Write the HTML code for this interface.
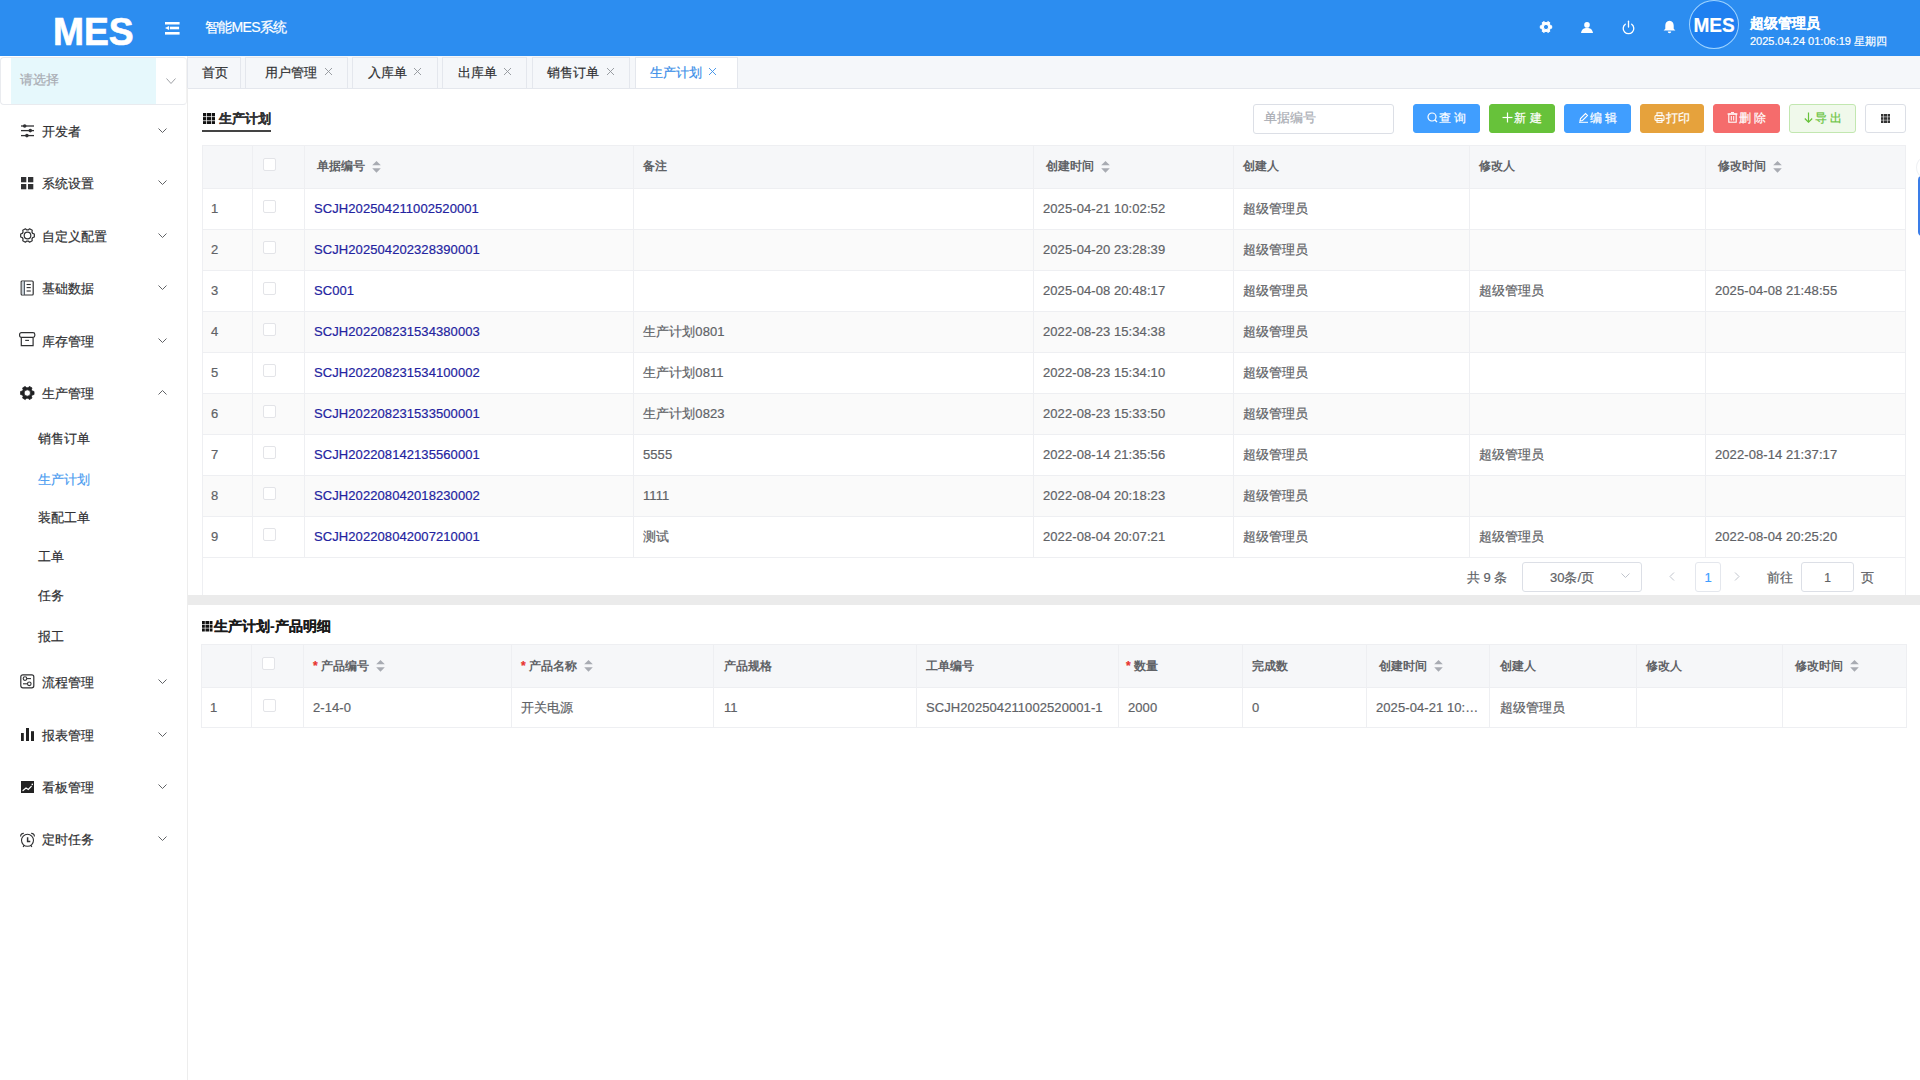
<!DOCTYPE html><html><head><meta charset="utf-8"><title>MES</title><style>
*{box-sizing:border-box}
body{margin:0;width:1920px;height:1080px;position:relative;overflow:hidden;background:#fff;font-family:"Liberation Sans",sans-serif;color:#303133}
.abs{position:absolute}
.t{position:absolute;white-space:nowrap;line-height:16px}
.hdr{left:0;top:0;width:1920px;height:56px;background:#2c8df0}
.side{left:0;top:56px;width:188px;height:1024px;background:#fff;border-right:1px solid #ededed}
.mi{position:absolute;left:42px;font-size:13px;color:#303133;line-height:16px;white-space:nowrap}
.sub{position:absolute;left:38px;font-size:13px;color:#303133;line-height:16px;white-space:nowrap}
.chev{position:absolute;left:158px;width:9px;height:5px}
.ico{position:absolute;left:20px;width:14px;height:14px}
.tab{position:absolute;top:57px;height:31px;background:#f5f7fa;border:1px solid #e4e7ed;border-bottom:none}
.tabt{position:absolute;top:65px;font-size:13px;color:#303133;line-height:16px;white-space:nowrap}
.btn{position:absolute;top:104px;height:29px;border-radius:3px;color:#fff;font-size:12px;line-height:29px;text-align:center;white-space:nowrap}
.tbl{position:absolute;border:1px solid #ebeef5}
.th{position:absolute;font-size:12px;font-weight:bold;color:#606266;line-height:16px;white-space:nowrap}
.td{position:absolute;font-size:13px;color:#606266;line-height:16px;white-space:nowrap;letter-spacing:0.08px}
.lk{color:#2323a0}
.hl{position:absolute;height:1px;background:#eeeff2}
.vl{position:absolute;width:1px;background:#eeeff2}
.cb{position:absolute;width:13px;height:13px;border:1px solid #dcdfe6;border-radius:2px;background:#fff}
.sort{position:absolute;width:9px;height:12px}
.req{color:#f56c6c;margin-right:2px}
.td,.mi,.sub,.tabt,.t{-webkit-text-stroke:0.2px currentColor}
</style></head><body>
<div class="abs hdr"></div>
<div class="t" style="left:53px;top:12px;font-size:39px;line-height:40px;font-weight:bold;color:#fff;transform:scaleX(0.955);transform-origin:0 0;-webkit-text-stroke:0.7px #fff">MES</div>
<svg class="abs" style="left:164px;top:21px" width="17" height="15" viewBox="0 0 17 15"><rect x="1" y="1" width="14.6" height="2.5" fill="#fff"/><path d="M1 7 L5 5 L5 9 Z" fill="#fff"/><rect x="5.8" y="5.7" width="9.3" height="2.6" fill="#fff"/><rect x="1" y="11" width="14.6" height="2.6" fill="#fff"/></svg>
<div class="t" style="left:205px;top:19px;font-size:14px;color:#fff;letter-spacing:-0.7px">智能MES系统</div>
<svg class="abs" style="left:1538px;top:19px" width="16" height="16" viewBox="0 0 16 16"><path fill-rule="evenodd" stroke-linejoin="round" stroke="#fff" stroke-width="1" d="M12.36 6.53 L13.69 6.85 L13.69 9.15 L12.36 9.47 L11.45 11.04 L11.84 12.35 L9.85 13.50 L8.91 12.51 L7.09 12.51 L6.15 13.50 L4.16 12.35 L4.55 11.04 L3.64 9.47 L2.31 9.15 L2.31 6.85 L3.64 6.53 L4.55 4.96 L4.16 3.65 L6.15 2.50 L7.09 3.49 L8.91 3.49 L9.85 2.50 L11.84 3.65 L11.45 4.96 Z M5.40 8.00 a2.60 2.60 0 1 0 5.20 0 a2.60 2.60 0 1 0 -5.20 0 Z" fill="#fff"/></svg>
<svg class="abs" style="left:1580px;top:21px" width="14" height="13" viewBox="0 0 14 13"><circle cx="7" cy="3.9" r="2.8" fill="#fff"/><path d="M1 12 C1.5 8.3 4 7 7 7 C10 7 12.5 8.3 13 12 Z" fill="#fff"/></svg>
<svg class="abs" style="left:1621px;top:20px" width="15" height="15" viewBox="0 0 15 15"><path d="M4.3 4.2 A5.3 5.3 0 1 0 10.7 4.2" fill="none" stroke="#fff" stroke-width="1.3" stroke-linecap="round"/><line x1="7.5" y1="1.2" x2="7.5" y2="7" stroke="#fff" stroke-width="1.3" stroke-linecap="round"/></svg>
<svg class="abs" style="left:1663px;top:20px" width="13" height="14" viewBox="0 0 13 14"><path d="M6.5 0.8 C3.7 0.8 2.3 3 2.3 5.6 L2.3 8.8 L0.6 10.6 L12.4 10.6 L10.7 8.8 L10.7 5.6 C10.7 3 9.3 0.8 6.5 0.8 Z" fill="#fff"/><path d="M4.8 11.6 L8.2 11.6 C8.2 12.6 7.5 13.2 6.5 13.2 C5.5 13.2 4.8 12.6 4.8 11.6 Z" fill="#fff"/></svg>
<div class="abs" style="left:1689px;top:0px;width:50px;height:49px;border-radius:50%;background:#1f80f0;border:1px solid #9ed3ff"></div>
<div class="t" style="left:1689px;top:15px;width:50px;text-align:center;font-size:20px;line-height:20px;font-weight:bold;color:#fff;transform:scaleX(0.95)">MES</div>
<div class="t" style="left:1750px;top:15px;font-size:14px;font-weight:bold;color:#fff">超级管理员</div>
<div class="t" style="left:1750px;top:33px;font-size:11px;color:#fff">2025.04.24 01:06:19 星期四</div>
<div class="abs side"></div>
<div class="abs" style="left:0px;top:57px;width:187px;height:48px;border:1px solid #e9ebef;border-right-color:#f2f2f2;border-radius:4px;background:#fff"></div>
<div class="abs" style="left:11px;top:58px;width:145px;height:46px;background:#e6f8fc"></div>
<div class="t" style="left:20px;top:72px;font-size:13px;color:#a8abb2">请选择</div>
<svg class="abs" style="left:166px;top:78px" width="10" height="6" viewBox="0 0 10 6"><path d="M0.5 0.5 L5.0 5.5 L9.5 0.5" fill="none" stroke="#9ea1a6" stroke-width="1"/></svg>
<svg class="abs" style="left:20px;top:124px" width="15" height="14" viewBox="0 0 15 14"><line x1="1" y1="2" x2="14" y2="2" stroke="#303133" stroke-width="1.3"/><circle cx="4.7" cy="2" r="1.8" fill="#303133"/><line x1="1" y1="6.6" x2="14" y2="6.6" stroke="#303133" stroke-width="1.3"/><circle cx="10.3" cy="6.6" r="1.8" fill="#303133"/><line x1="1" y1="11.6" x2="14" y2="11.6" stroke="#303133" stroke-width="1.3"/><circle cx="6.9" cy="11.6" r="1.8" fill="#303133"/></svg>
<div class="mi" style="top:124px">开发者</div>
<svg class="abs" style="left:158px;top:128px" width="9" height="5" viewBox="0 0 9 5"><path d="M0.5 0.5 L4.5 4.5 L8.5 0.5" fill="none" stroke="#606266" stroke-width="1"/></svg>
<svg class="abs" style="left:20px;top:176px" width="15" height="15" viewBox="0 0 15 15"><rect x="1" y="1" width="5.3" height="5.3" fill="#303133"/><rect x="8" y="1" width="5.3" height="5.3" fill="#303133"/><rect x="1" y="8" width="5.3" height="5.3" fill="#303133"/><rect x="8" y="8" width="5.3" height="5.3" fill="#303133"/></svg>
<div class="mi" style="top:176px">系统设置</div>
<svg class="abs" style="left:158px;top:180px" width="9" height="5" viewBox="0 0 9 5"><path d="M0.5 0.5 L4.5 4.5 L8.5 0.5" fill="none" stroke="#606266" stroke-width="1"/></svg>
<svg class="abs" style="left:20px;top:228px" width="15" height="15" viewBox="0 0 15 15"><path stroke-linejoin="round" d="M8.23 1.95 L9.59 0.82 L12.24 2.35 L11.94 4.09 L12.67 5.36 L14.33 5.97 L14.33 9.03 L12.67 9.64 L11.94 10.91 L12.24 12.65 L9.59 14.18 L8.23 13.05 L6.77 13.05 L5.41 14.18 L2.76 12.65 L3.06 10.91 L2.33 9.64 L0.67 9.03 L0.67 5.97 L2.33 5.36 L3.06 4.09 L2.76 2.35 L5.41 0.82 L6.77 1.95 Z" fill="none" stroke="#303133" stroke-width="1.2"/><circle cx="7.50" cy="7.50" r="3.30" fill="none" stroke="#303133" stroke-width="1.2"/></svg>
<div class="mi" style="top:229px">自定义配置</div>
<svg class="abs" style="left:158px;top:233px" width="9" height="5" viewBox="0 0 9 5"><path d="M0.5 0.5 L4.5 4.5 L8.5 0.5" fill="none" stroke="#606266" stroke-width="1"/></svg>
<svg class="abs" style="left:20px;top:280px" width="15" height="16" viewBox="0 0 15 16"><rect x="1.2" y="1" width="12" height="14" rx="1" fill="none" stroke="#303133" stroke-width="1.2"/><rect x="1.8" y="1.6" width="2.4" height="12.8" fill="#cfd6dc"/><line x1="4.4" y1="1" x2="4.4" y2="15" stroke="#4a5560" stroke-width="1.1"/><line x1="6.6" y1="4.5" x2="10.8" y2="4.5" stroke="#303133" stroke-width="1.1"/><line x1="6.6" y1="7.6" x2="10.8" y2="7.6" stroke="#303133" stroke-width="1.1"/><line x1="6.6" y1="11" x2="10.8" y2="11" stroke="#303133" stroke-width="1.1"/></svg>
<div class="mi" style="top:281px">基础数据</div>
<svg class="abs" style="left:158px;top:285px" width="9" height="5" viewBox="0 0 9 5"><path d="M0.5 0.5 L4.5 4.5 L8.5 0.5" fill="none" stroke="#606266" stroke-width="1"/></svg>
<svg class="abs" style="left:19px;top:332px" width="17" height="15" viewBox="0 0 17 15"><rect x="0.6" y="0.6" width="15.2" height="4.8" rx="1.8" fill="none" stroke="#303133" stroke-width="1.2"/><path d="M2.3 5.4 L2.3 13.6 L14.1 13.6 L14.1 5.4" fill="none" stroke="#303133" stroke-width="1.2"/><line x1="6.2" y1="8.4" x2="10" y2="8.4" stroke="#303133" stroke-width="1.1"/></svg>
<div class="mi" style="top:334px">库存管理</div>
<svg class="abs" style="left:158px;top:338px" width="9" height="5" viewBox="0 0 9 5"><path d="M0.5 0.5 L4.5 4.5 L8.5 0.5" fill="none" stroke="#606266" stroke-width="1"/></svg>
<svg class="abs" style="left:20px;top:386px" width="15" height="15" viewBox="0 0 15 15"><path fill-rule="evenodd" stroke-linejoin="round" stroke="#1f2022" stroke-width="0.8" d="M7.98 1.84 L9.36 0.42 L11.97 1.92 L11.43 3.83 L12.10 5.01 L14.03 5.49 L14.03 8.51 L12.10 8.99 L11.43 10.17 L11.97 12.08 L9.36 13.58 L7.98 12.16 L6.62 12.16 L5.24 13.58 L2.63 12.08 L3.17 10.17 L2.50 8.99 L0.57 8.51 L0.57 5.49 L2.50 5.01 L3.17 3.83 L2.63 1.92 L5.24 0.42 L6.62 1.84 Z M4.10 7.00 a3.20 3.20 0 1 0 6.40 0 a3.20 3.20 0 1 0 -6.40 0 Z" fill="#1f2022"/></svg>
<div class="mi" style="top:386px">生产管理</div>
<svg class="abs" style="left:158px;top:390px" width="9" height="5" viewBox="0 0 9 5"><path d="M0.5 4.5 L4.5 0.5 L8.5 4.5" fill="none" stroke="#606266" stroke-width="1"/></svg>
<svg class="abs" style="left:20px;top:674px" width="15" height="15" viewBox="0 0 15 15"><rect x="0.8" y="0.8" width="13" height="13" rx="2" fill="none" stroke="#303133" stroke-width="1.2"/><circle cx="5" cy="4.6" r="1.8" fill="none" stroke="#303133" stroke-width="1.1"/><line x1="6.8" y1="4.6" x2="11" y2="4.6" stroke="#303133" stroke-width="1.1"/><circle cx="9.3" cy="9.8" r="1.8" fill="none" stroke="#303133" stroke-width="1.1"/><line x1="3" y1="9.8" x2="7.5" y2="9.8" stroke="#303133" stroke-width="1.1"/></svg>
<div class="mi" style="top:675px">流程管理</div>
<svg class="abs" style="left:158px;top:679px" width="9" height="5" viewBox="0 0 9 5"><path d="M0.5 0.5 L4.5 4.5 L8.5 0.5" fill="none" stroke="#606266" stroke-width="1"/></svg>
<svg class="abs" style="left:20px;top:727px" width="15" height="15" viewBox="0 0 15 15"><rect x="1" y="6" width="2.8" height="8" fill="#222"/><rect x="6" y="1" width="3" height="13" fill="#222"/><rect x="11" y="4.2" width="3" height="9.8" fill="#222"/></svg>
<div class="mi" style="top:728px">报表管理</div>
<svg class="abs" style="left:158px;top:732px" width="9" height="5" viewBox="0 0 9 5"><path d="M0.5 0.5 L4.5 4.5 L8.5 0.5" fill="none" stroke="#606266" stroke-width="1"/></svg>
<svg class="abs" style="left:20px;top:780px" width="15" height="14" viewBox="0 0 15 14"><rect x="1" y="1" width="13" height="12" fill="#222"/><path d="M3 10.5 L6 8 L8.3 9.5 L11.3 6.3" fill="none" stroke="#fff" stroke-width="1.2" stroke-linecap="round"/><circle cx="12.3" cy="4.4" r="0.8" fill="#fff"/></svg>
<div class="mi" style="top:780px">看板管理</div>
<svg class="abs" style="left:158px;top:784px" width="9" height="5" viewBox="0 0 9 5"><path d="M0.5 0.5 L4.5 4.5 L8.5 0.5" fill="none" stroke="#606266" stroke-width="1"/></svg>
<svg class="abs" style="left:20px;top:832px" width="15" height="16" viewBox="0 0 15 16"><circle cx="7.5" cy="8.3" r="6" fill="none" stroke="#303133" stroke-width="1.1"/><path d="M7.6 5.3 L7.6 9.5 L10.3 9.5" fill="none" stroke="#303133" stroke-width="1.5"/><path d="M0.6 4.4 C0.6 2.3 2.2 1.2 3.8 1.3" fill="none" stroke="#303133" stroke-width="1.2"/><path d="M14.4 4.4 C14.4 2.3 12.8 1.2 11.2 1.3" fill="none" stroke="#303133" stroke-width="1.2"/><line x1="4" y1="13.3" x2="3.2" y2="15" stroke="#303133" stroke-width="1.2"/><line x1="11" y1="13.3" x2="11.8" y2="15" stroke="#303133" stroke-width="1.2"/></svg>
<div class="mi" style="top:832px">定时任务</div>
<svg class="abs" style="left:158px;top:836px" width="9" height="5" viewBox="0 0 9 5"><path d="M0.5 0.5 L4.5 4.5 L8.5 0.5" fill="none" stroke="#606266" stroke-width="1"/></svg>
<div class="sub" style="top:431px;">销售订单</div>
<div class="sub" style="top:472px;color:#4b9cf0">生产计划</div>
<div class="sub" style="top:510px;">装配工单</div>
<div class="sub" style="top:549px;">工单</div>
<div class="sub" style="top:588px;">任务</div>
<div class="sub" style="top:629px;">报工</div>
<div class="abs" style="left:188px;top:56px;width:1732px;height:33px;background:#f5f7fa;border-bottom:1px solid #e4e7ed"></div>
<div class="abs" style="left:187px;top:57px;width:54px;height:31px;background:#f5f7fa;border:1px solid #e4e7ed;border-bottom:none;"></div>
<div class="tabt" style="left:202px;">首页</div>
<div class="abs" style="left:245px;top:57px;width:103px;height:31px;background:#f5f7fa;border:1px solid #e4e7ed;border-bottom:none;"></div>
<div class="tabt" style="left:265px;">用户管理</div>
<svg class="abs" style="left:324px;top:67px" width="9" height="9" viewBox="0 0 9 9"><path d="M1 1 L8 8 M8 1 L1 8" stroke="#909399" stroke-width="0.9"/></svg>
<div class="abs" style="left:352px;top:57px;width:86px;height:31px;background:#f5f7fa;border:1px solid #e4e7ed;border-bottom:none;"></div>
<div class="tabt" style="left:368px;">入库单</div>
<svg class="abs" style="left:413px;top:67px" width="9" height="9" viewBox="0 0 9 9"><path d="M1 1 L8 8 M8 1 L1 8" stroke="#909399" stroke-width="0.9"/></svg>
<div class="abs" style="left:442px;top:57px;width:85px;height:31px;background:#f5f7fa;border:1px solid #e4e7ed;border-bottom:none;"></div>
<div class="tabt" style="left:458px;">出库单</div>
<svg class="abs" style="left:503px;top:67px" width="9" height="9" viewBox="0 0 9 9"><path d="M1 1 L8 8 M8 1 L1 8" stroke="#909399" stroke-width="0.9"/></svg>
<div class="abs" style="left:532px;top:57px;width:98px;height:31px;background:#f5f7fa;border:1px solid #e4e7ed;border-bottom:none;"></div>
<div class="tabt" style="left:547px;">销售订单</div>
<svg class="abs" style="left:606px;top:67px" width="9" height="9" viewBox="0 0 9 9"><path d="M1 1 L8 8 M8 1 L1 8" stroke="#909399" stroke-width="0.9"/></svg>
<div class="abs" style="left:635px;top:57px;width:103px;height:31px;background:#fff;border:1px solid #e4e7ed;border-bottom:none;"></div>
<div class="tabt" style="left:650px;color:#3a8ee8">生产计划</div>
<svg class="abs" style="left:708px;top:67px" width="9" height="9" viewBox="0 0 9 9"><path d="M1 1 L8 8 M8 1 L1 8" stroke="#3a8ee8" stroke-width="0.9"/></svg>
<svg class="abs" style="left:203.0px;top:112.5px" width="12.0" height="11.5" viewBox="0 0 12.00 11.50"><rect x="0.00" y="0.00" width="3.24" height="3.35" fill="#111"/><rect x="0.00" y="4.07" width="3.24" height="3.35" fill="#111"/><rect x="0.00" y="8.15" width="3.24" height="3.35" fill="#111"/><rect x="3.96" y="0.00" width="4.08" height="3.35" fill="#111"/><rect x="3.96" y="4.07" width="4.08" height="3.35" fill="#111"/><rect x="3.96" y="8.15" width="4.08" height="3.35" fill="#111"/><rect x="8.76" y="0.00" width="3.24" height="3.35" fill="#111"/><rect x="8.76" y="4.07" width="3.24" height="3.35" fill="#111"/><rect x="8.76" y="8.15" width="3.24" height="3.35" fill="#111"/></svg>
<div class="t" style="left:219px;top:111px;font-size:13px;font-weight:bold;color:#303133">生产计划</div>
<div class="abs" style="left:202px;top:130px;width:69px;height:2px;background:#444"></div>
<div class="abs" style="left:1253px;top:104px;width:141px;height:30px;border:1px solid #dcdfe6;border-radius:3px;background:#fff"></div>
<div class="t" style="left:1264px;top:110px;font-size:13px;color:#a8abb2">单据编号</div>
<div class="abs" style="left:1413px;top:104px;width:67px;height:29px;background:#409eff;border:1px solid #409eff;border-radius:3px"></div>
<div class="t" style="left:1413px;top:104px;width:67px;height:29px;line-height:29px;text-align:center;font-size:12px;color:#fff"><svg style="vertical-align:-1px;margin-right:1px" width="11" height="11" viewBox="0 0 11 11"><circle cx="5" cy="5" r="4" fill="none" stroke="#fff" stroke-width="1.2"/><line x1="8" y1="8" x2="10" y2="10" stroke="#fff" stroke-width="1.2"/></svg>查&nbsp;询</div>
<div class="abs" style="left:1489px;top:104px;width:66px;height:29px;background:#67c23a;border:1px solid #67c23a;border-radius:3px"></div>
<div class="t" style="left:1489px;top:104px;width:66px;height:29px;line-height:29px;text-align:center;font-size:12px;color:#fff"><svg style="vertical-align:-1px;margin-right:1px" width="11" height="11" viewBox="0 0 11 11"><line x1="5.5" y1="0.5" x2="5.5" y2="10.5" stroke="#fff" stroke-width="1.2"/><line x1="0.5" y1="5.5" x2="10.5" y2="5.5" stroke="#fff" stroke-width="1.2"/></svg>新&nbsp;建</div>
<div class="abs" style="left:1564px;top:104px;width:67px;height:29px;background:#409eff;border:1px solid #409eff;border-radius:3px"></div>
<div class="t" style="left:1564px;top:104px;width:67px;height:29px;line-height:29px;text-align:center;font-size:12px;color:#fff"><svg style="vertical-align:-1px;margin-right:1px" width="11" height="11" viewBox="0 0 11 11"><path d="M2 9 L2.5 6.5 L7.5 1.5 L9.5 3.5 L4.5 8.5 Z" fill="none" stroke="#fff" stroke-width="1.1"/><line x1="1" y1="10.3" x2="10" y2="10.3" stroke="#fff" stroke-width="1"/></svg>编&nbsp;辑</div>
<div class="abs" style="left:1640px;top:104px;width:64px;height:29px;background:#e6a23c;border:1px solid #e6a23c;border-radius:3px"></div>
<div class="t" style="left:1640px;top:104px;width:64px;height:29px;line-height:29px;text-align:center;font-size:12px;color:#fff"><svg style="vertical-align:-1px;margin-right:1px" width="11" height="11" viewBox="0 0 11 11"><rect x="1" y="3.5" width="9" height="5" rx="1" fill="none" stroke="#fff" stroke-width="1.1"/><rect x="3" y="0.8" width="5" height="3" fill="none" stroke="#fff" stroke-width="1.1"/><rect x="3" y="6.5" width="5" height="3.8" fill="none" stroke="#fff" stroke-width="1.1"/></svg>打印</div>
<div class="abs" style="left:1713px;top:104px;width:67px;height:29px;background:#f56c6c;border:1px solid #f56c6c;border-radius:3px"></div>
<div class="t" style="left:1713px;top:104px;width:67px;height:29px;line-height:29px;text-align:center;font-size:12px;color:#fff"><svg style="vertical-align:-1px;margin-right:1px" width="11" height="11" viewBox="0 0 11 11"><line x1="0.5" y1="2" x2="10.5" y2="2" stroke="#fff" stroke-width="1.1"/><rect x="1.8" y="2" width="7.4" height="8.2" fill="none" stroke="#fff" stroke-width="1.1"/><line x1="4.3" y1="4" x2="4.3" y2="8.5" stroke="#fff" stroke-width="1"/><line x1="6.7" y1="4" x2="6.7" y2="8.5" stroke="#fff" stroke-width="1"/><line x1="4" y1="0.6" x2="7" y2="0.6" stroke="#fff" stroke-width="1"/></svg>删&nbsp;除</div>
<div class="abs" style="left:1789px;top:104px;width:67px;height:29px;background:#f0f9eb;border:1px solid #c2e7b0;border-radius:3px"></div>
<div class="t" style="left:1789px;top:104px;width:67px;height:29px;line-height:29px;text-align:center;font-size:12px;color:#67c23a"><svg style="vertical-align:-1px;margin-right:1px" width="11" height="11" viewBox="0 0 11 11"><line x1="5.5" y1="0.5" x2="5.5" y2="10" stroke="#67c23a" stroke-width="1.2"/><path d="M1.8 6.5 L5.5 10.2 L9.2 6.5" fill="none" stroke="#67c23a" stroke-width="1.2"/></svg>导&nbsp;出</div>
<div class="abs" style="left:1865px;top:104px;width:41px;height:29px;background:#fff;border:1px solid #dcdfe6;border-radius:3px"></div>
<svg class="abs" style="left:1881.0px;top:113.5px" width="9.0" height="9.0" viewBox="0 0 9.00 9.00"><rect x="0.00" y="0.00" width="2.43" height="2.64" fill="#333"/><rect x="0.00" y="3.18" width="2.43" height="2.64" fill="#333"/><rect x="0.00" y="6.36" width="2.43" height="2.64" fill="#333"/><rect x="2.97" y="0.00" width="3.06" height="2.64" fill="#333"/><rect x="2.97" y="3.18" width="3.06" height="2.64" fill="#333"/><rect x="2.97" y="6.36" width="3.06" height="2.64" fill="#333"/><rect x="6.57" y="0.00" width="2.43" height="2.64" fill="#333"/><rect x="6.57" y="3.18" width="2.43" height="2.64" fill="#333"/><rect x="6.57" y="6.36" width="2.43" height="2.64" fill="#333"/></svg>
<div class="abs" style="left:202px;top:145px;width:1704px;height:450px;background:#fff;border:1px solid #eeeff2;border-bottom:none"></div>
<div class="abs" style="left:203px;top:146px;width:1702px;height:42px;background:#f6f7f9"></div>
<div class="abs" style="left:203px;top:230px;width:1702px;height:40px;background:#fafafa"></div>
<div class="abs" style="left:203px;top:312px;width:1702px;height:40px;background:#fafafa"></div>
<div class="abs" style="left:203px;top:394px;width:1702px;height:40px;background:#fafafa"></div>
<div class="abs" style="left:203px;top:476px;width:1702px;height:40px;background:#fafafa"></div>
<div class="hl" style="left:202px;top:188px;width:1703px"></div>
<div class="hl" style="left:202px;top:229px;width:1703px"></div>
<div class="hl" style="left:202px;top:270px;width:1703px"></div>
<div class="hl" style="left:202px;top:311px;width:1703px"></div>
<div class="hl" style="left:202px;top:352px;width:1703px"></div>
<div class="hl" style="left:202px;top:393px;width:1703px"></div>
<div class="hl" style="left:202px;top:434px;width:1703px"></div>
<div class="hl" style="left:202px;top:475px;width:1703px"></div>
<div class="hl" style="left:202px;top:516px;width:1703px"></div>
<div class="hl" style="left:202px;top:557px;width:1703px"></div>
<div class="vl" style="left:252px;top:145px;height:412px"></div>
<div class="vl" style="left:304px;top:145px;height:412px"></div>
<div class="vl" style="left:633px;top:145px;height:412px"></div>
<div class="vl" style="left:1033px;top:145px;height:412px"></div>
<div class="vl" style="left:1233px;top:145px;height:412px"></div>
<div class="vl" style="left:1469px;top:145px;height:412px"></div>
<div class="vl" style="left:1705px;top:145px;height:412px"></div>
<div class="abs" style="left:262.5px;top:157.5px;width:13px;height:13px;border:1px solid #e3e4e8;border-radius:2px;background:#fff"></div>
<div class="th" style="left:317px;top:158px">单据编号</div>
<svg class="abs" style="left:372.2px;top:160.8px" width="9" height="12" viewBox="0 0 9 12"><path d="M0.2 4.3 L4.5 0 L8.8 4.3 Z" fill="#a8abb2"/><path d="M0.2 7.3 L8.8 7.3 L4.5 11.8 Z" fill="#a8abb2"/></svg>
<div class="th" style="left:643px;top:158px">备注</div>
<div class="th" style="left:1046px;top:158px">创建时间</div>
<svg class="abs" style="left:1101.2px;top:160.8px" width="9" height="12" viewBox="0 0 9 12"><path d="M0.2 4.3 L4.5 0 L8.8 4.3 Z" fill="#a8abb2"/><path d="M0.2 7.3 L8.8 7.3 L4.5 11.8 Z" fill="#a8abb2"/></svg>
<div class="th" style="left:1243px;top:158px">创建人</div>
<div class="th" style="left:1479px;top:158px">修改人</div>
<div class="th" style="left:1718px;top:158px">修改时间</div>
<svg class="abs" style="left:1773.2px;top:160.8px" width="9" height="12" viewBox="0 0 9 12"><path d="M0.2 4.3 L4.5 0 L8.8 4.3 Z" fill="#a8abb2"/><path d="M0.2 7.3 L8.8 7.3 L4.5 11.8 Z" fill="#a8abb2"/></svg>
<div class="td" style="left:211px;top:201px">1</div>
<div class="abs" style="left:262.5px;top:199.5px;width:13px;height:13px;border:1px solid #e3e4e8;border-radius:2px;background:#fff"></div>
<div class="td lk" style="left:314px;top:201px">SCJH202504211002520001</div>
<div class="td" style="left:1043px;top:201px">2025-04-21 10:02:52</div>
<div class="td" style="left:1243px;top:201px">超级管理员</div>
<div class="td" style="left:211px;top:242px">2</div>
<div class="abs" style="left:262.5px;top:240.5px;width:13px;height:13px;border:1px solid #e3e4e8;border-radius:2px;background:#fff"></div>
<div class="td lk" style="left:314px;top:242px">SCJH202504202328390001</div>
<div class="td" style="left:1043px;top:242px">2025-04-20 23:28:39</div>
<div class="td" style="left:1243px;top:242px">超级管理员</div>
<div class="td" style="left:211px;top:283px">3</div>
<div class="abs" style="left:262.5px;top:281.5px;width:13px;height:13px;border:1px solid #e3e4e8;border-radius:2px;background:#fff"></div>
<div class="td lk" style="left:314px;top:283px">SC001</div>
<div class="td" style="left:1043px;top:283px">2025-04-08 20:48:17</div>
<div class="td" style="left:1243px;top:283px">超级管理员</div>
<div class="td" style="left:1479px;top:283px">超级管理员</div>
<div class="td" style="left:1715px;top:283px">2025-04-08 21:48:55</div>
<div class="td" style="left:211px;top:324px">4</div>
<div class="abs" style="left:262.5px;top:322.5px;width:13px;height:13px;border:1px solid #e3e4e8;border-radius:2px;background:#fff"></div>
<div class="td lk" style="left:314px;top:324px">SCJH202208231534380003</div>
<div class="td" style="left:643px;top:324px">生产计划0801</div>
<div class="td" style="left:1043px;top:324px">2022-08-23 15:34:38</div>
<div class="td" style="left:1243px;top:324px">超级管理员</div>
<div class="td" style="left:211px;top:365px">5</div>
<div class="abs" style="left:262.5px;top:363.5px;width:13px;height:13px;border:1px solid #e3e4e8;border-radius:2px;background:#fff"></div>
<div class="td lk" style="left:314px;top:365px">SCJH202208231534100002</div>
<div class="td" style="left:643px;top:365px">生产计划0811</div>
<div class="td" style="left:1043px;top:365px">2022-08-23 15:34:10</div>
<div class="td" style="left:1243px;top:365px">超级管理员</div>
<div class="td" style="left:211px;top:406px">6</div>
<div class="abs" style="left:262.5px;top:404.5px;width:13px;height:13px;border:1px solid #e3e4e8;border-radius:2px;background:#fff"></div>
<div class="td lk" style="left:314px;top:406px">SCJH202208231533500001</div>
<div class="td" style="left:643px;top:406px">生产计划0823</div>
<div class="td" style="left:1043px;top:406px">2022-08-23 15:33:50</div>
<div class="td" style="left:1243px;top:406px">超级管理员</div>
<div class="td" style="left:211px;top:447px">7</div>
<div class="abs" style="left:262.5px;top:445.5px;width:13px;height:13px;border:1px solid #e3e4e8;border-radius:2px;background:#fff"></div>
<div class="td lk" style="left:314px;top:447px">SCJH202208142135560001</div>
<div class="td" style="left:643px;top:447px">5555</div>
<div class="td" style="left:1043px;top:447px">2022-08-14 21:35:56</div>
<div class="td" style="left:1243px;top:447px">超级管理员</div>
<div class="td" style="left:1479px;top:447px">超级管理员</div>
<div class="td" style="left:1715px;top:447px">2022-08-14 21:37:17</div>
<div class="td" style="left:211px;top:488px">8</div>
<div class="abs" style="left:262.5px;top:486.5px;width:13px;height:13px;border:1px solid #e3e4e8;border-radius:2px;background:#fff"></div>
<div class="td lk" style="left:314px;top:488px">SCJH202208042018230002</div>
<div class="td" style="left:643px;top:488px">1111</div>
<div class="td" style="left:1043px;top:488px">2022-08-04 20:18:23</div>
<div class="td" style="left:1243px;top:488px">超级管理员</div>
<div class="td" style="left:211px;top:529px">9</div>
<div class="abs" style="left:262.5px;top:527.5px;width:13px;height:13px;border:1px solid #e3e4e8;border-radius:2px;background:#fff"></div>
<div class="td lk" style="left:314px;top:529px">SCJH202208042007210001</div>
<div class="td" style="left:643px;top:529px">测试</div>
<div class="td" style="left:1043px;top:529px">2022-08-04 20:07:21</div>
<div class="td" style="left:1243px;top:529px">超级管理员</div>
<div class="td" style="left:1479px;top:529px">超级管理员</div>
<div class="td" style="left:1715px;top:529px">2022-08-04 20:25:20</div>
<div class="t" style="left:1467px;top:570px;font-size:13px;color:#606266">共 9 条</div>
<div class="abs" style="left:1522px;top:562px;width:120px;height:30px;border:1px solid #dcdfe6;border-radius:3px;background:#fff"></div>
<div class="t" style="left:1550px;top:570px;font-size:13px;color:#606266">30条/页</div>
<svg class="abs" style="left:1621px;top:573px" width="9" height="5" viewBox="0 0 9 5"><path d="M0.5 0.5 L4.5 4.5 L8.5 0.5" fill="none" stroke="#c0c4cc" stroke-width="1"/></svg>
<svg class="abs" style="left:1669px;top:572px" width="6" height="9" viewBox="0 0 6 9"><path d="M5 0.5 L1 4.5 L5 8.5" fill="none" stroke="#c0c4cc" stroke-width="1"/></svg>
<div class="abs" style="left:1695px;top:562px;width:26px;height:30px;border:1px solid #e4e7ed;border-radius:3px;background:#fff"></div>
<div class="t" style="left:1695px;top:570px;width:26px;text-align:center;font-size:13px;color:#409eff">1</div>
<svg class="abs" style="left:1734px;top:572px" width="6" height="9" viewBox="0 0 6 9"><path d="M1 0.5 L5 4.5 L1 8.5" fill="none" stroke="#c0c4cc" stroke-width="1"/></svg>
<div class="t" style="left:1767px;top:570px;font-size:13px;color:#606266">前往</div>
<div class="abs" style="left:1801px;top:562px;width:53px;height:30px;border:1px solid #dcdfe6;border-radius:3px;background:#fff"></div>
<div class="t" style="left:1801px;top:570px;width:53px;text-align:center;font-size:12px;color:#606266">1</div>
<div class="t" style="left:1861px;top:570px;font-size:13px;color:#606266">页</div>
<div class="abs" style="left:188px;top:595px;width:1732px;height:10px;background:#ebebeb"></div>
<svg class="abs" style="left:202.0px;top:621.0px" width="10.5" height="10.5" viewBox="0 0 10.50 10.50"><rect x="0.00" y="0.00" width="2.83" height="3.08" fill="#111"/><rect x="0.00" y="3.71" width="2.83" height="3.08" fill="#111"/><rect x="0.00" y="7.42" width="2.83" height="3.08" fill="#111"/><rect x="3.46" y="0.00" width="3.57" height="3.08" fill="#111"/><rect x="3.46" y="3.71" width="3.57" height="3.08" fill="#111"/><rect x="3.46" y="7.42" width="3.57" height="3.08" fill="#111"/><rect x="7.67" y="0.00" width="2.83" height="3.08" fill="#111"/><rect x="7.67" y="3.71" width="2.83" height="3.08" fill="#111"/><rect x="7.67" y="7.42" width="2.83" height="3.08" fill="#111"/></svg>
<div class="t" style="left:214px;top:618px;font-size:14px;font-weight:bold;color:#1a1a1a">生产计划-产品明细</div>
<div class="abs" style="left:201px;top:644px;width:1706px;height:84px;background:#fff;border:1px solid #eeeff2"></div>
<div class="abs" style="left:202px;top:645px;width:1704px;height:42px;background:#f6f7f9"></div>
<div class="hl" style="left:201px;top:687px;width:1705px"></div>
<div class="vl" style="left:251px;top:644px;height:83px"></div>
<div class="vl" style="left:303px;top:644px;height:83px"></div>
<div class="vl" style="left:511px;top:644px;height:83px"></div>
<div class="vl" style="left:713px;top:644px;height:83px"></div>
<div class="vl" style="left:916px;top:644px;height:83px"></div>
<div class="vl" style="left:1118px;top:644px;height:83px"></div>
<div class="vl" style="left:1242px;top:644px;height:83px"></div>
<div class="vl" style="left:1366px;top:644px;height:83px"></div>
<div class="vl" style="left:1489px;top:644px;height:83px"></div>
<div class="vl" style="left:1636px;top:644px;height:83px"></div>
<div class="vl" style="left:1782px;top:644px;height:83px"></div>
<div class="abs" style="left:262.0px;top:656.5px;width:13px;height:13px;border:1px solid #e3e4e8;border-radius:2px;background:#fff"></div>
<div class="t" style="left:313px;top:658px;font-size:12px;color:#e8322e;font-weight:bold">*</div>
<div class="th" style="left:321px;top:658px">产品编号</div>
<svg class="abs" style="left:376.2px;top:660.3px" width="9" height="12" viewBox="0 0 9 12"><path d="M0.2 4.3 L4.5 0 L8.8 4.3 Z" fill="#a8abb2"/><path d="M0.2 7.3 L8.8 7.3 L4.5 11.8 Z" fill="#a8abb2"/></svg>
<div class="t" style="left:521px;top:658px;font-size:12px;color:#e8322e;font-weight:bold">*</div>
<div class="th" style="left:529px;top:658px">产品名称</div>
<svg class="abs" style="left:584.2px;top:660.3px" width="9" height="12" viewBox="0 0 9 12"><path d="M0.2 4.3 L4.5 0 L8.8 4.3 Z" fill="#a8abb2"/><path d="M0.2 7.3 L8.8 7.3 L4.5 11.8 Z" fill="#a8abb2"/></svg>
<div class="th" style="left:724px;top:658px">产品规格</div>
<div class="th" style="left:926px;top:658px">工单编号</div>
<div class="t" style="left:1126px;top:658px;font-size:12px;color:#e8322e;font-weight:bold">*</div>
<div class="th" style="left:1134px;top:658px">数量</div>
<div class="th" style="left:1252px;top:658px">完成数</div>
<div class="th" style="left:1379px;top:658px">创建时间</div>
<svg class="abs" style="left:1434.2px;top:660.3px" width="9" height="12" viewBox="0 0 9 12"><path d="M0.2 4.3 L4.5 0 L8.8 4.3 Z" fill="#a8abb2"/><path d="M0.2 7.3 L8.8 7.3 L4.5 11.8 Z" fill="#a8abb2"/></svg>
<div class="th" style="left:1500px;top:658px">创建人</div>
<div class="th" style="left:1646px;top:658px">修改人</div>
<div class="th" style="left:1795px;top:658px">修改时间</div>
<svg class="abs" style="left:1850.2px;top:660.3px" width="9" height="12" viewBox="0 0 9 12"><path d="M0.2 4.3 L4.5 0 L8.8 4.3 Z" fill="#a8abb2"/><path d="M0.2 7.3 L8.8 7.3 L4.5 11.8 Z" fill="#a8abb2"/></svg>
<div class="td" style="left:210px;top:700px">1</div>
<div class="abs" style="left:262.5px;top:698.5px;width:13px;height:13px;border:1px solid #e3e4e8;border-radius:2px;background:#fff"></div>
<div class="td" style="left:313px;top:700px">2-14-0</div>
<div class="td" style="left:521px;top:700px">开关电源</div>
<div class="td" style="left:724px;top:700px">11</div>
<div class="td" style="left:926px;top:700px">SCJH202504211002520001-1</div>
<div class="td" style="left:1128px;top:700px">2000</div>
<div class="td" style="left:1252px;top:700px">0</div>
<div class="td" style="left:1376px;top:700px">2025-04-21 10:…</div>
<div class="td" style="left:1500px;top:700px">超级管理员</div>
<div class="abs" style="left:1916px;top:158px;width:14px;height:19px;border-radius:50%;background:#fff;border:1px solid #eef0f3"></div>
<div class="abs" style="left:1918px;top:176px;width:10px;height:60px;border-radius:4px;background:#3a7de8"></div>
</body></html>
